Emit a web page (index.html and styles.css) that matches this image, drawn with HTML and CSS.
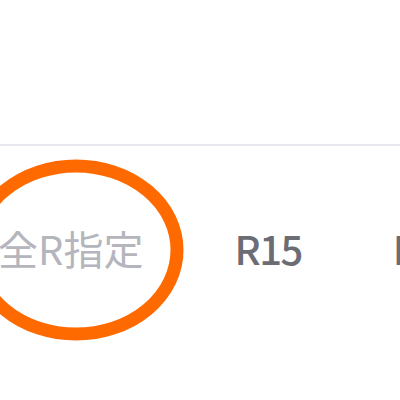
FILE: index.html
```html
<!DOCTYPE html>
<html lang="ja">
<head>
<meta charset="utf-8">
<link rel="stylesheet" href="styles.css">
</head>
<body>
<div class="page">
  <div class="top"></div>
  <div class="tabs">
    <span class="tab tab-all">全R指定</span>
    <span class="tab">R15</span>
    <span class="tab">R18</span>
  </div>
  <svg class="mark" width="400" height="400" viewBox="0 0 400 400">
    <ellipse cx="76" cy="250" rx="101" ry="84" fill="none" stroke="#ff6a00" stroke-width="13"/>
  </svg>
</div>
</body>
</html>
```
FILE: styles.css
```css
html, body {
  margin: 0;
  padding: 0;
  background: #ffffff;
}
.page {
  position: relative;
  width: 400px;
  height: 400px;
  overflow: hidden;
  font-family: "Noto Sans CJK JP", "Noto Sans", sans-serif;
}
.top {
  height: 144px;
  border-bottom: 2px solid #e7e7ee;
}
.tabs {
  display: flex;
  gap: 91px;
  margin-left: -2px;
  padding-top: 74px;
  white-space: nowrap;
  font-size: 40px;
  line-height: 56px;
}
.tab {
  color: #6c6c75;
  font-weight: 500;
  letter-spacing: -1.5px;
}
.tab-all {
  color: #b5b5bd;
  font-weight: 400;
  letter-spacing: 0;
}
.mark {
  position: absolute;
  left: 0;
  top: 0;
}
```
